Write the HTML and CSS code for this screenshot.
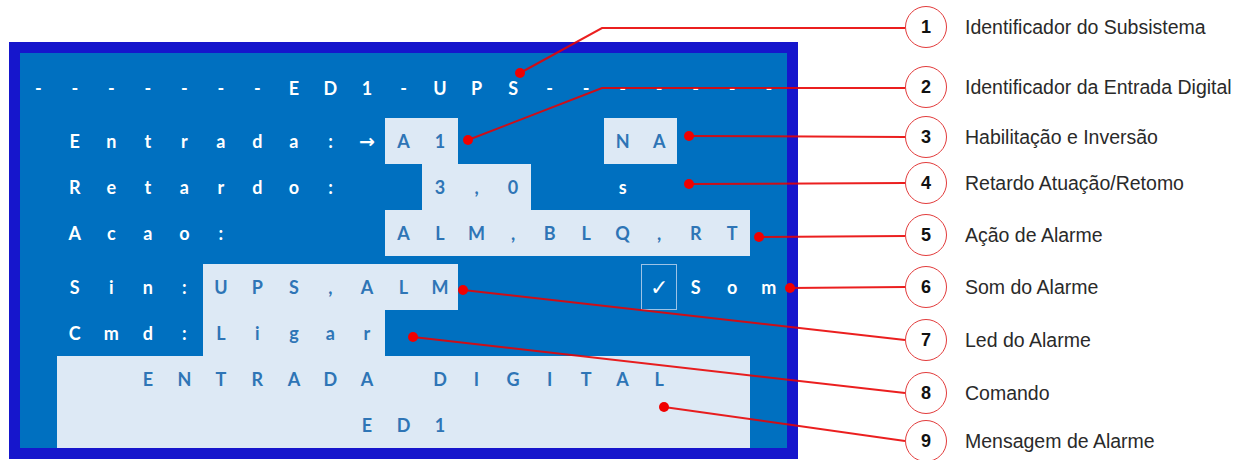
FILE: index.html
```html
<!DOCTYPE html>
<html lang="pt">
<head>
    <meta charset="UTF-8">
    <meta name="viewport" content="width=device-width, initial-scale=1.0">
    <title>ED1 - UPS</title>
    <link rel="stylesheet" href="styles.css">
</head>
<body>
    <div class="screen">
        <div class="row title">
            <span>-</span><span>-</span><span>-</span><span>-</span><span>-</span><span>-</span><span>-</span>
            <span>E</span><span>D</span><span>1</span><span>-</span><span>U</span><span>P</span><span>S</span>
            <span>-</span><span>-</span><span>-</span><span>-</span><span>-</span><span>-</span><span>-</span>
        </div>

        <div class="block first">
            <div class="row">
                <span></span>
                <span>E</span><span>n</span><span>t</span><span>r</span><span>a</span><span>d</span><span>a</span><span>:</span><span class="arrow">→</span>
                <div class="box s2"><span>A</span><span>1</span></div>
                <span class="s4"></span>
                <div class="box s2"><span>N</span><span>A</span></div>
                <span class="s3"></span>
            </div>
            <div class="row">
                <span></span>
                <span>R</span><span>e</span><span>t</span><span>a</span><span>r</span><span>d</span><span>o</span><span>:</span>
                <span class="s2"></span>
                <div class="box s3"><span>3</span><span>,</span><span>0</span></div>
                <span class="s2"></span>
                <span>s</span>
                <span class="s4"></span>
            </div>
            <div class="row">
                <span></span>
                <span>A</span><span>c</span><span>a</span><span>o</span><span>:</span>
                <span class="s4"></span>
                <div class="box s10">
                    <span>A</span><span>L</span><span>M</span><span>,</span><span>B</span><span>L</span><span>Q</span><span>,</span><span>R</span><span>T</span>
                </div>
                <span></span>
            </div>
        </div>

        <div class="block second">
            <div class="row">
                <span></span>
                <span>S</span><span>i</span><span>n</span><span>:</span>
                <div class="box s7">
                    <span>U</span><span>P</span><span>S</span><span>,</span><span>A</span><span>L</span><span>M</span>
                </div>
                <span class="s5"></span>
                <span class="check">✓</span>
                <span>S</span><span>o</span><span>m</span>
            </div>
            <div class="row">
                <span></span>
                <span>C</span><span>m</span><span>d</span><span>:</span>
                <div class="box s5"><span>L</span><span>i</span><span>g</span><span>a</span><span>r</span></div>
                <span class="s11"></span>
            </div>
            <div class="row">
                <span></span>
                <div class="box s19">
                    <span></span><span></span>
                    <span>E</span><span>N</span><span>T</span><span>R</span><span>A</span><span>D</span><span>A</span>
                    <span></span>
                    <span>D</span><span>I</span><span>G</span><span>I</span><span>T</span><span>A</span><span>L</span>
                    <span></span><span></span>
                </div>
                <span></span>
            </div>
            <div class="row">
                <span></span>
                <div class="box s19">
                    <span class="s8"></span>
                    <span>E</span><span>D</span><span>1</span>
                    <span class="s8"></span>
                </div>
                <span></span>
            </div>
        </div>
    </div>

    <svg class="callouts" width="1235" height="460" viewBox="0 0 1235 460">
        <g class="lines">
            <polyline points="520,73 602,28 905,28"/>
            <polyline points="468,140 602,88 905,88"/>
            <polyline points="689,136 905,137"/>
            <polyline points="689,184 905,183"/>
            <polyline points="759,237 905,236"/>
            <polyline points="790,288 905,287"/>
            <polyline points="463,290 905,340"/>
            <polyline points="413,337 905,393"/>
            <polyline points="664,407 905,441"/>
        </g>
        <g class="dots">
            <circle cx="520" cy="73" r="5"/>
            <circle cx="468" cy="140" r="5"/>
            <circle cx="689" cy="136" r="5"/>
            <circle cx="689" cy="184" r="5"/>
            <circle cx="759" cy="237" r="5"/>
            <circle cx="790" cy="288" r="5"/>
            <circle cx="463" cy="290" r="5"/>
            <circle cx="413" cy="337" r="5"/>
            <circle cx="664" cy="407" r="5"/>
        </g>
    </svg>

    <ul class="legend">
        <li class="c1"><span class="num">1</span>Identificador do Subsistema</li>
        <li class="c2"><span class="num">2</span>Identificador da Entrada Digital</li>
        <li class="c3"><span class="num">3</span>Habilitação e Inversão</li>
        <li class="c4"><span class="num">4</span>Retardo Atuação/Retomo</li>
        <li class="c5"><span class="num">5</span>Ação de Alarme</li>
        <li class="c6"><span class="num">6</span>Som do Alarme</li>
        <li class="c7"><span class="num">7</span>Led do Alarme</li>
        <li class="c8"><span class="num">8</span>Comando</li>
        <li class="c9"><span class="num">9</span>Mensagem de Alarme</li>
    </ul>
</body>
</html>
```

FILE: styles.css
```css
body {
    margin: 0;
    width: 1235px;
    height: 460px;
    overflow: hidden;
    position: relative;
    background: #fff;
    font-family: "Liberation Sans", Arial, sans-serif;
}
.screen {
    margin: 42px 0 0 9px;
    width: 767px;
    padding-top: 12px;
    border: 11px solid #1616cc;
    background-color: #0070c0;
    font-family: Lato, "Open Sans", sans-serif;
    font-weight: 700;
    font-size: 18px;
    color: #fff;
}
.block.first {
    margin-top: 7px;
}
.block.second {
    margin-top: 8px;
}
.row {
    display: grid;
    grid-template-columns: repeat(21, 1fr);
    height: 46px;
}
.row span,
.box span {
    display: flex;
    align-items: center;
    justify-content: center;
}
.box {
    display: grid;
    grid-auto-flow: column;
    grid-auto-columns: 1fr;
    background-color: #dde9f5;
    color: #2e75b6;
}
.s2 { grid-column: span 2; }
.s3 { grid-column: span 3; }
.s4 { grid-column: span 4; }
.s5 { grid-column: span 5; }
.s7 { grid-column: span 7; }
.s8 { grid-column: span 8; }
.s10 { grid-column: span 10; }
.s11 { grid-column: span 11; }
.s19 { grid-column: span 19; }

.arrow {
    font-family: "DejaVu Sans", sans-serif;
    font-size: 19px;
}
.row .check {
    border: 1px solid #9dc3e6;
    font-family: "DejaVu Sans", sans-serif;
    font-weight: 400;
    font-size: 22px;
}

.callouts {
    position: absolute;
    left: 0;
    top: 0;
    pointer-events: none;
}
.lines polyline {
    fill: none;
    stroke: #e80000;
    stroke-width: 2;
    stroke-opacity: 0.88;
}
.dots circle {
    fill: #f00000;
}

.legend {
    list-style: none;
    margin: 0;
    padding: 0;
}
.legend li {
    position: absolute;
    left: 905px;
    display: flex;
    align-items: center;
    gap: 18px;
    font-size: 19.5px;
    color: #2a2a2a;
    white-space: nowrap;
}
.legend .num {
    width: 42px;
    height: 42px;
    box-sizing: border-box;
    border: 1.5px solid #e23b3b;
    border-radius: 50%;
    background: #fff;
    display: flex;
    align-items: center;
    justify-content: center;
    font-weight: 700;
    font-size: 18px;
    color: #111;
}
.c1 { top: 6px; }
.c2 { top: 66px; }
.c3 { top: 116px; }
.c4 { top: 162px; }
.c5 { top: 214px; }
.c6 { top: 266px; }
.c7 { top: 319px; }
.c8 { top: 372px; }
.c9 { top: 420px; }
```
